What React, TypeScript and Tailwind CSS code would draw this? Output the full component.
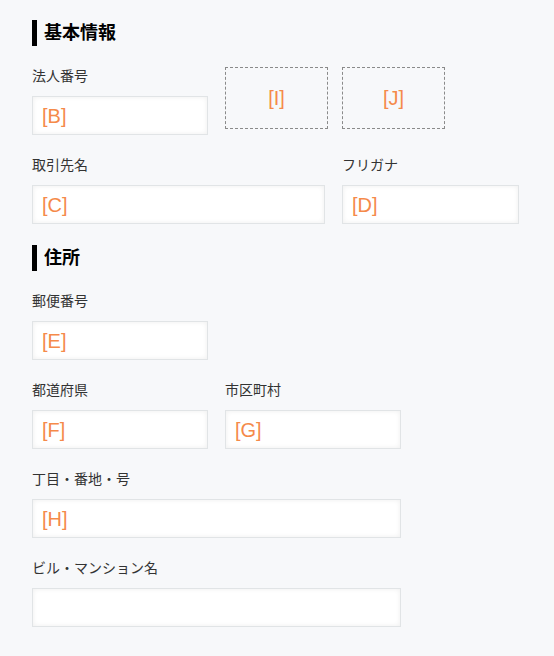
import React from "react";

const font = { fontFamily: '"Liberation Sans", "Noto Sans CJK JP", sans-serif' };

function Heading({ children, extra = "" }: { children: React.ReactNode; extra?: string }) {
  return (
    <div className={`flex h-[26px] items-center gap-[7px] ${extra}`}>
      <div className="h-[26px] w-[5px] bg-black" />
      <span className="text-[18px] font-bold leading-none text-black">{children}</span>
    </div>
  );
}

function Input({ ph, w }: { ph?: string; w: string }) {
  return (
    <div
      className={`flex h-[39px] items-center border border-[#e1e4e6] bg-white pl-[9px] shadow-[inset_0_0_5px_rgba(0,0,0,0.07)] ${w}`}
    >
      {ph && <span className="text-[20px] leading-none text-[#f58a4a]">{ph}</span>}
    </div>
  );
}

function Field({ label, ph, w }: { label: string; ph?: string; w: string }) {
  return (
    <div className="flex flex-col gap-[10px]">
      <div className="h-[20px] text-[14px] leading-[20px] text-[#333]">{label}</div>
      <Input ph={ph} w={w} />
    </div>
  );
}

function DashBox({ text }: { text: string }) {
  return (
    <div className="flex h-[62px] w-[103px] items-center justify-center border border-dashed border-[#8a8a8a]">
      <span className="text-[20px] leading-none text-[#f58a4a]">{text}</span>
    </div>
  );
}

export default function App() {
  return (
    <div className="min-h-[656px] w-[554px] bg-[#f7f8fa] pl-[32px] pt-[20px]" style={font}>
      <div className="flex flex-col gap-[20px]">
        <Heading>基本情報</Heading>
        <div className="flex items-start">
          <Field label="法人番号" ph="[B]" w="w-[176px]" />
          <div className="ml-[17px] mt-[1px] flex gap-[14px]">
            <DashBox text="[I]" />
            <DashBox text="[J]" />
          </div>
        </div>
        <div className="flex gap-[17px]">
          <Field label="取引先名" ph="[C]" w="w-[293px]" />
          <Field label="フリガナ" ph="[D]" w="w-[177px]" />
        </div>
        <Heading extra="mt-[1px]">住所</Heading>
        <Field label="郵便番号" ph="[E]" w="w-[176px]" />
        <div className="flex gap-[17px]">
          <Field label="都道府県" ph="[F]" w="w-[176px]" />
          <Field label="市区町村" ph="[G]" w="w-[176px]" />
        </div>
        <Field label="丁目・番地・号" ph="[H]" w="w-[369px]" />
        <Field label="ビル・マンション名" w="w-[369px]" />
      </div>
    </div>
  );
}
